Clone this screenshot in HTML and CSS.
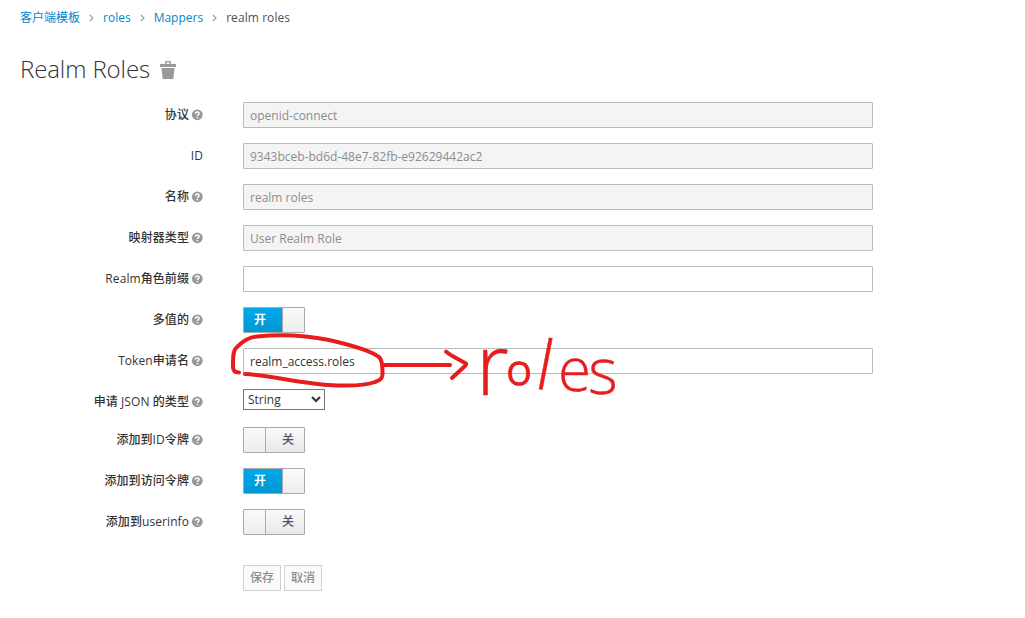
FILE: index.html
```html
<!DOCTYPE html>
<html lang="zh-CN">
<head>
<meta charset="utf-8">
<title>Realm Roles</title>
<link rel="stylesheet" href="styles.css">
</head>
<body>
<svg class="defs" width="0" height="0" aria-hidden="true">
  <symbol id="help" viewBox="0 0 12 12">
    <circle cx="6.3" cy="5.8" r="5.4" fill="#999"/>
    <path d="M4.4 4.6C4.5 2.4 8.2 2.5 8.1 4.5C8 5.6 6.4 5.5 6.4 7M6.400 7.900V9.300" fill="none" stroke="#fff" stroke-width="1.5"/>
  </symbol>
</svg>
<main class="page">
  <ol class="breadcrumb">
    <li><a>客户端模板</a></li>
    <li><svg class="sep" viewBox="0 0 5 8"><path d="M.8.8 4 4 .8 7.2"/></svg><a>roles</a></li>
    <li><svg class="sep" viewBox="0 0 5 8"><path d="M.8.8 4 4 .8 7.2"/></svg><a>Mappers</a></li>
    <li><svg class="sep" viewBox="0 0 5 8"><path d="M.8.8 4 4 .8 7.2"/></svg><span class="current">realm roles</span></li>
  </ol>
  <h1 class="title"><span>Realm Roles</span>
    <svg class="trash" viewBox="0 0 16 18"><path d="M0 3h5V1q0-1 1-1h4q1 0 1 1v2h5v3H0zM6.500 1.300V3h3V1.300zM1.500 7h13L13.300 18H2.700z" fill="#999" fill-rule="evenodd"/></svg>
  </h1>
  <form class="form">
    <div class="row"><label class="label">协议<svg class="help"><use href="#help"/></svg></label><input class="field" value="openid-connect" disabled></div>
    <div class="row"><label class="label">ID</label><input class="field" value="9343bceb-bd6d-48e7-82fb-e92629442ac2" disabled></div>
    <div class="row"><label class="label">名称<svg class="help"><use href="#help"/></svg></label><input class="field" value="realm roles" disabled></div>
    <div class="row"><label class="label">映射器类型<svg class="help"><use href="#help"/></svg></label><input class="field" value="User Realm Role" disabled></div>
    <div class="row"><label class="label">Realm角色前缀<svg class="help"><use href="#help"/></svg></label><input class="field" value=""></div>
    <div class="row"><label class="label">多值的<svg class="help"><use href="#help"/></svg></label><div class="switch on"><span class="state">开</span><span class="knob"></span></div></div>
    <div class="row"><label class="label">Token申请名<svg class="help"><use href="#help"/></svg></label><input class="field" value="realm_access.roles"></div>
    <div class="row short"><label class="label">申请 JSON 的类型<svg class="help"><use href="#help"/></svg></label><select class="select"><option>String</option></select></div>
    <div class="row"><label class="label">添加到ID令牌<svg class="help"><use href="#help"/></svg></label><div class="switch off"><span class="knob"></span><span class="state">关</span></div></div>
    <div class="row"><label class="label">添加到访问令牌<svg class="help"><use href="#help"/></svg></label><div class="switch on"><span class="state">开</span><span class="knob"></span></div></div>
    <div class="row"><label class="label">添加到userinfo<svg class="help"><use href="#help"/></svg></label><div class="switch off"><span class="knob"></span><span class="state">关</span></div></div>
    <div class="actions"><button class="btn" type="button" disabled>保存</button><button class="btn" type="button" disabled>取消</button></div>
  </form>
</main>
<svg class="ink" viewBox="0 0 1025 618">
  <path class="line" d="M239 372.500C235 372.500 233 371 233 367C233 357 233 350 237 347C243 341 251 337 257 336.500C280 334 307 335.500 329 340C351 345 371 351 379 357C383 361 382 366 382.500 372C383 378 381 380 375 382C365 386 347 386 328 385C299 383 269 375 245 374"/>
  <path class="line" d="M383 365H450M446 351.500C451 356 460 360 466 363.500Q467 364 465 366L452 378"/>
  <text class="note"><tspan x="476" y="395" font-size="84">r</tspan><tspan class="bold" x="506.500" y="385" font-size="43">o</tspan><tspan x="533" y="388" font-size="69" rotate="11">l</tspan><tspan x="558" y="391" font-size="60">e</tspan><tspan x="588" y="394" font-size="64">s</tspan></text>
</svg>
</body>
</html>
```
FILE: styles.css
```css
* { box-sizing: border-box; }

body {
  margin: 0;
  background: #fff;
  color: #333;
  font: 12px/20px "Open Sans", "Noto Sans CJK SC", sans-serif;
}

.defs { position: absolute; }

.page { padding: 8px 20px 0; }

.breadcrumb {
  display: flex;
  margin: 0;
  padding: 0;
  list-style: none;
}

.breadcrumb li { display: flex; align-items: center; color: #4d5258; }
.breadcrumb a { color: #0088ce; }
.current { letter-spacing: .07px; }

.sep {
  width: 5px;
  height: 8px;
  margin: 0 9px;
  fill: none;
  stroke: #9c9c9c;
  stroke-width: 1.2;
}

.title {
  display: flex;
  align-items: center;
  gap: 10px;
  height: 34px;
  margin: 24px 0 16px;
  font-size: 24px;
  font-weight: 300;
  line-height: 34px;
  letter-spacing: -.1px;
}

.trash { width: 16px; height: 18px; margin-top: 2px; }

.form { display: flex; flex-direction: column; gap: 15px; }

.row {
  display: grid;
  grid-template-columns: 183px 630px;
  column-gap: 40px;
  height: 26px;
}

.row.short { height: 23px; }

.label {
  display: flex;
  justify-content: flex-end;
  align-items: center;
  height: 26px;
  font-weight: 500;
  letter-spacing: .08px;
  white-space: pre;
}

.help { width: 12px; height: 12px; margin-left: 2px; }

.field {
  width: 630px;
  height: 26px;
  padding: 2px 6px;
  border: 1px solid #bbb;
  border-radius: 1px;
  background: #fff;
  color: #333;
  font: inherit;
}

.field:disabled { background: #f4f4f4; color: #8b8d8f; }

.select {
  width: 82px;
  height: 21px;
  padding: 0;
  border: 1px solid #767676;
  background: #fff;
  color: #333;
  font: inherit;
}

.switch {
  display: flex;
  width: 62px;
  height: 26px;
  border: 1px solid #aaa;
  border-radius: 1px;
  overflow: hidden;
  font-weight: 700;
  line-height: 24px;
}

.state { flex: 1; text-align: center; }
.on .state { padding-right: 6px; background: linear-gradient(#00a8e8, #0098d4); color: #fff; }
.off .state { padding-left: 6px; background: linear-gradient(#fafafa, #e8e8e8); color: #4d5258; font-weight: 500; }
.knob { width: 22px; background: linear-gradient(#fafafa, #ededed); }
.on .knob { border-left: 1px solid #aaa; }
.off .knob { border-right: 1px solid #aaa; }

.actions { display: flex; gap: 3px; margin: 15px 0 0 223px; }

.btn {
  width: 38px;
  height: 26px;
  padding: 0;
  border: 1px solid #d1d1d1;
  background: #fafafa;
  color: #8b8d8f;
  font: inherit;
  font-weight: 500;
}

.ink {
  position: absolute;
  top: 0;
  left: 0;
  width: 1025px;
  height: 618px;
  pointer-events: none;
}

.line {
  fill: none;
  stroke: #e71d1d;
  stroke-width: 4;
  stroke-linecap: round;
  stroke-linejoin: round;
}

.note {
  font-family: "Open Sans", sans-serif;
  font-weight: 300;
  fill: #e71d1d;
  stroke: #e71d1d;
  stroke-width: .4;
  stroke-linejoin: round;
}

.bold { stroke-width: 1.6; }
```
